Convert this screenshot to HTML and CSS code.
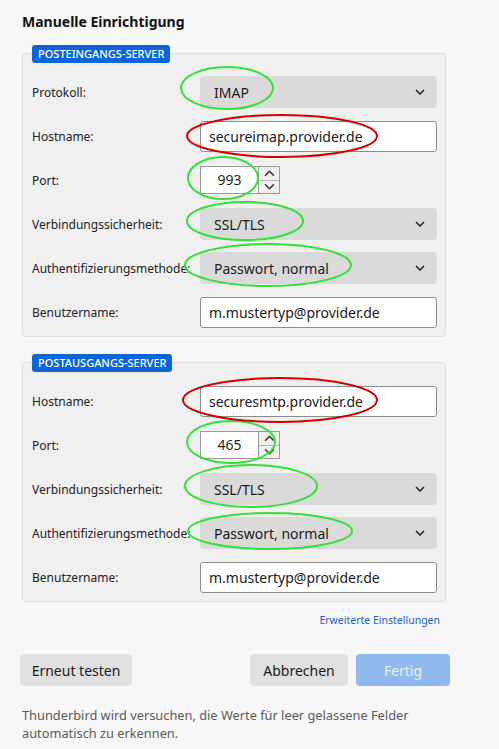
FILE: index.html
```html
<!DOCTYPE html>
<html lang="de">
<head>
<meta charset="utf-8">
<title>Manuelle Einrichtigung</title>
<link rel="stylesheet" href="styles.css">
</head>
<body>
<div class="page">
  <h1 class="title">Manuelle Einrichtigung</h1>

  <section class="group">
    <div class="badge">POSTEINGANGS-SERVER</div>
    <div class="rows">
      <div class="label">Protokoll:</div>
      <div class="select"><span>IMAP</span><svg class="chev" viewBox="0 0 10 6" width="10" height="6"><path d="M1 1 L5 5 L9 1"/></svg></div>

      <div class="label">Hostname:</div>
      <div class="input">secureimap.provider.de</div>

      <div class="label">Port:</div>
      <div class="portwrap">
        <div class="port"><span class="portval">993</span><div class="spin"><div class="spinbtn"><svg viewBox="0 0 10 6" width="10" height="6"><path d="M1 5 L5 1 L9 5"/></svg></div><div class="spinbtn"><svg viewBox="0 0 10 6" width="10" height="6"><path d="M1 1 L5 5 L9 1"/></svg></div></div></div>
      </div>

      <div class="label">Verbindungssicherheit:</div>
      <div class="select"><span>SSL/TLS</span><svg class="chev" viewBox="0 0 10 6" width="10" height="6"><path d="M1 1 L5 5 L9 1"/></svg></div>

      <div class="label">Authentifizierungsmethode:</div>
      <div class="select"><span>Passwort, normal</span><svg class="chev" viewBox="0 0 10 6" width="10" height="6"><path d="M1 1 L5 5 L9 1"/></svg></div>

      <div class="label">Benutzername:</div>
      <div class="input">m.mustertyp@provider.de</div>
    </div>
  </section>

  <section class="group group2">
    <div class="badge">POSTAUSGANGS-SERVER</div>
    <div class="rows">
      <div class="label">Hostname:</div>
      <div class="input">securesmtp.provider.de</div>

      <div class="label">Port:</div>
      <div class="portwrap">
        <div class="port"><span class="portval">465</span><div class="spin"><div class="spinbtn"><svg viewBox="0 0 10 6" width="10" height="6"><path d="M1 5 L5 1 L9 5"/></svg></div><div class="spinbtn"><svg viewBox="0 0 10 6" width="10" height="6"><path d="M1 1 L5 5 L9 1"/></svg></div></div></div>
      </div>

      <div class="label">Verbindungssicherheit:</div>
      <div class="select"><span>SSL/TLS</span><svg class="chev" viewBox="0 0 10 6" width="10" height="6"><path d="M1 1 L5 5 L9 1"/></svg></div>

      <div class="label">Authentifizierungsmethode:</div>
      <div class="select"><span>Passwort, normal</span><svg class="chev" viewBox="0 0 10 6" width="10" height="6"><path d="M1 1 L5 5 L9 1"/></svg></div>

      <div class="label">Benutzername:</div>
      <div class="input">m.mustertyp@provider.de</div>
    </div>
  </section>

  <div class="linkrow"><a class="link" href="#">Erweiterte Einstellungen</a></div>

  <div class="buttons">
    <button class="btn btn-retry">Erneut testen</button>
    <div class="right">
      <button class="btn btn-cancel">Abbrechen</button>
      <button class="btn primary">Fertig</button>
    </div>
  </div>

  <p class="note">Thunderbird wird versuchen, die Werte für leer gelassene Felder automatisch zu erkennen.</p>
</div>

<svg class="marks" width="499" height="749" viewBox="0 0 499 749">
  <g class="green">
    <ellipse cx="227" cy="88" rx="46" ry="21"/>
    <ellipse cx="223" cy="178" rx="35" ry="21"/>
    <ellipse cx="245" cy="221" rx="58" ry="19"/>
    <ellipse cx="268" cy="265" rx="83" ry="21"/>
    <ellipse cx="231" cy="442" rx="44" ry="21"/>
    <ellipse cx="251" cy="486" rx="66" ry="21"/>
    <ellipse cx="270" cy="531" rx="82" ry="18"/>
  </g>
  <g class="red">
    <ellipse cx="282" cy="136" rx="95" ry="21"/>
    <ellipse cx="280" cy="400" rx="97" ry="22"/>
  </g>
</svg>
</body>
</html>
```

FILE: styles.css
```css
html, body {
  margin: 0;
  padding: 0;
}
body {
  background: #f7f7f7;
  font-family: "Noto Sans", "Open Sans", sans-serif;
  color: #1f1f1f;
  width: 499px;
  height: 749px;
  overflow: hidden;
  position: relative;
}
.page {
  padding: 0 53px 0 22px;
}
.title {
  margin: 0;
  padding-top: 12px;
  font-size: 14px;
  line-height: 20px;
  font-weight: 700;
  color: #111;
}
.group {
  margin-top: 21px;
  border: 1px solid #dedede;
  border-radius: 4px;
  background: #f0f0f0;
  padding: 0 8px 8px 9px;
}
.group2 {
  margin-top: 25px;
}
.badge {
  display: block;
  width: max-content;
  margin-top: -9px;
  height: 18px;
  line-height: 18px;
  padding: 0 6px;
  background: #0b65d8;
  color: #fff;
  border-radius: 3px;
  font-size: 11px;
  font-weight: 500;
}
.rows {
  margin-top: 13px;
  display: grid;
  grid-template-columns: 168px 237px;
  grid-auto-rows: 32px;
  row-gap: 12px;
  align-items: center;
}
.label {
  font-size: 12px;
  color: #222;
  white-space: nowrap;
}
.select {
  height: 32px;
  box-sizing: border-box;
  background: #dadada;
  border-radius: 4px;
  display: flex;
  align-items: center;
  justify-content: space-between;
  padding: 0 12px 0 14px;
  font-size: 14px;
  color: #1a1a1a;
}
.chev path {
  fill: none;
  stroke: #222;
  stroke-width: 1.5;
}
.input {
  height: 31px;
  box-sizing: border-box;
  background: #fff;
  border: 1px solid #8c8c8c;
  border-radius: 3px;
  display: flex;
  align-items: center;
  padding: 0 8px;
  font-size: 14px;
  color: #1a1a1a;
}
.portwrap {
  display: flex;
  align-items: center;
}
.port {
  display: flex;
  height: 28px;
  box-sizing: border-box;
  border: 1px solid #9a9a9a;
  background: #fff;
}
.portval {
  width: 57px;
  text-align: center;
  line-height: 26px;
  font-size: 14px;
}
.spin {
  width: 20px;
  display: flex;
  flex-direction: column;
  border-left: 1px solid #9a9a9a;
  background: #f0f0f0;
}
.spinbtn {
  flex: 1;
  display: flex;
  align-items: center;
  justify-content: center;
}
.spinbtn + .spinbtn {
  border-top: 1px solid #b5b5b5;
}
.spinbtn svg {
  width: 11px;
  height: 7px;
}
.spinbtn path {
  fill: none;
  stroke: #333;
  stroke-width: 1.4;
}
.linkrow {
  display: flex;
  justify-content: flex-end;
  padding-right: 6px;
  margin-top: 11px;
}
.link {
  font-size: 10.5px;
  color: #1f5fc9;
  text-decoration: none;
}
.buttons {
  margin-top: 27px;
  margin-left: -2px;
  margin-right: -4px;
  display: flex;
  justify-content: space-between;
}
.right {
  display: flex;
  gap: 8px;
}
.btn {
  height: 32px;
  border: none;
  border-radius: 4px;
  background: #e0e0e0;
  font-family: inherit;
  font-size: 14px;
  color: #1a1a1a;
  padding: 0;
}
.btn-retry {
  width: 112px;
}
.btn-cancel {
  width: 98px;
}
.btn.primary {
  background: #8fb9ee;
  color: #eaf2fc;
  width: 94px;
}
.note {
  margin: 20px 0 0;
  font-size: 12.8px;
  line-height: 18px;
  color: #5a5a5a;
}
.marks {
  position: absolute;
  left: 0;
  top: 0;
  pointer-events: none;
}
.marks ellipse {
  fill: none;
  stroke-width: 2;
}
.marks .green ellipse {
  stroke: #33e033;
}
.marks .red ellipse {
  stroke: #d40000;
}
```
